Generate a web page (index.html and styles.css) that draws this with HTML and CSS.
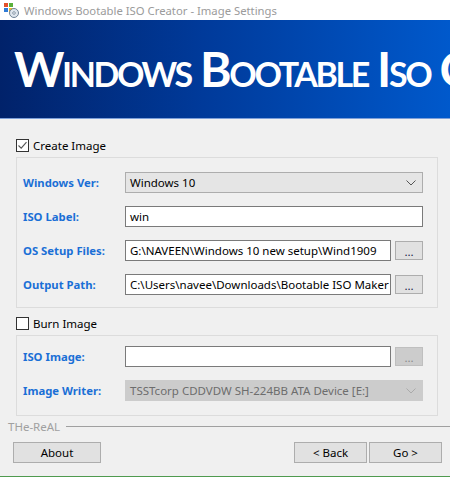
FILE: index.html
```html
<!DOCTYPE html>
<html>
<head>
    <title>Windows Bootable ISO Creator - Image Settings</title>
    <link rel="stylesheet" href="styles.css">
</head>
<body>
    <div class="titlebar">
        <svg class="app-icon" width="16" height="16" viewBox="0 0 16 16">
            <rect x="1" y="1" width="4" height="4" fill="#e2502a"/>
            <rect x="6" y="1" width="4" height="4" fill="#5ab03c"/>
            <rect x="1" y="6" width="4" height="4" fill="#2f7bd6"/>
            <rect x="6" y="6" width="4" height="4" fill="#f2b521"/>
            <circle cx="11" cy="11" r="4.5" fill="#dfe6ee" stroke="#6f8296" stroke-width="1"/>
            <circle cx="11" cy="11" r="1.3" fill="#fff" stroke="#6f8296" stroke-width="0.8"/>
        </svg>
        <span class="title-text">Windows Bootable ISO Creator - Image Settings</span>
    </div>

    <div class="banner">
        <span class="banner-text">Windows Bootable Iso Creator</span>
    </div>

    <div class="content">
        <label class="check-row">
            <span class="checkbox checked">
                <svg width="11" height="11" viewBox="0 0 11 11"><path d="M1.5 5.5 L4.2 8.2 L9.5 2.2" fill="none" stroke="#555" stroke-width="1.1"/></svg>
            </span>
            <span>Create Image</span>
        </label>

        <div class="group group-create">
            <div class="row">
                <span class="label">Windows Ver:</span>
                <div class="combo">
                    <span>Windows 10</span>
                    <svg class="chevron" width="10" height="6" viewBox="0 0 10 6"><path d="M0.5 0.5 L5 5 L9.5 0.5" fill="none" stroke="#555" stroke-width="1"/></svg>
                </div>
            </div>
            <div class="row">
                <span class="label">ISO Label:</span>
                <div class="textbox">win</div>
            </div>
            <div class="row">
                <span class="label">OS Setup Files:</span>
                <div class="textbox short">G:\NAVEEN\Windows 10 new setup\Wind1909</div>
                <div class="browse">...</div>
            </div>
            <div class="row">
                <span class="label">Output Path:</span>
                <div class="textbox short">C:\Users\navee\Downloads\Bootable ISO Maker</div>
                <div class="browse">...</div>
            </div>
        </div>

        <label class="check-row burn">
            <span class="checkbox"></span>
            <span>Burn Image</span>
        </label>

        <div class="group group-burn">
            <div class="row">
                <span class="label">ISO Image:</span>
                <div class="textbox short"></div>
                <div class="browse disabled">...</div>
            </div>
            <div class="row">
                <span class="label">Image Writer:</span>
                <div class="combo disabled">
                    <span>TSSTcorp CDDVDW SH-224BB ATA Device [E:]</span>
                    <svg class="chevron" width="10" height="6" viewBox="0 0 10 6"><path d="M0.5 0.5 L5 5 L9.5 0.5" fill="none" stroke="#aaa" stroke-width="1"/></svg>
                </div>
            </div>
        </div>
    </div>

    <div class="footer">
        <div class="signature">
            <span>THe-ReAL</span>
            <div class="sig-line"></div>
        </div>
        <div class="buttons">
            <div class="btn about">About</div>
            <div class="spacer"></div>
            <div class="btn nav">&lt; Back</div>
            <div class="btn nav">Go &gt;</div>
        </div>
    </div>
    <div class="bottom-edge"></div>
</body>
</html>
```

FILE: styles.css
```css
body {
    margin: 0;
    width: 450px;
    height: 477px;
    overflow: hidden;
    background: #f0f0f0;
    font-family: 'Noto Sans', 'Open Sans', sans-serif;
    font-size: 11.5px;
    color: #000;
}

.titlebar {
    height: 20px;
    background: #fff;
    display: flex;
    align-items: center;
    padding-left: 3px;
}
.app-icon {
    margin-right: 5px;
}
.title-text {
    color: #9b9b9b;
    font-size: 11.3px;
    white-space: nowrap;
}

.banner {
    height: 98px;
    background: linear-gradient(90deg, #01226a 0%, #003a9a 45%, #0059cc 100%);
    border-bottom: 1px solid #7d9fd8;
    display: flex;
    align-items: center;
    padding-left: 14px;
    overflow: hidden;
    white-space: nowrap;
}
.banner-text {
    color: #fff;
    font-family: 'Lato', 'Open Sans', sans-serif;
    font-weight: bold;
    font-size: 48px;
    font-variant: small-caps;
    letter-spacing: -2.4px;
    margin-top: -2px;
}

.content {
    padding: 19px 12px 0 16px;
}

.check-row {
    display: flex;
    align-items: center;
    height: 14px;
    gap: 4px;
}
.checkbox {
    width: 11px;
    height: 11px;
    border: 1px solid #333;
    background: #fff;
    display: flex;
    align-items: center;
    justify-content: center;
}

.group {
    border: 1px solid #dcdcdc;
    padding-left: 6px;
    display: flex;
    flex-direction: column;
    gap: 13px;
}
.group-create {
    margin-top: 5px;
    padding-top: 14px;
    padding-bottom: 12px;
}
.burn {
    margin-top: 8px;
}
.group-burn {
    margin-top: 5px;
    padding-top: 10px;
    padding-bottom: 14px;
}

.row {
    display: flex;
    align-items: center;
    height: 21px;
}
.label {
    width: 102px;
    color: #1a6fd6;
    font-weight: bold;
    font-size: 11.3px;
    white-space: nowrap;
}

.textbox, .combo {
    box-sizing: border-box;
    height: 21px;
    width: 298px;
    border: 1px solid #7a7a7a;
    background: #fff;
    padding: 0 4px;
    display: flex;
    align-items: center;
    white-space: nowrap;
    overflow: hidden;
}
.textbox.short {
    width: 266px;
}
.combo {
    background: #e5e5e5;
    border-color: #adadad;
    justify-content: space-between;
    padding-right: 6px;
}
.combo.disabled {
    background: #cccccc;
    border-color: #cccccc;
    color: #6d6d6d;
}
.chevron {
    flex: none;
}

.browse {
    box-sizing: border-box;
    width: 28px;
    height: 19px;
    margin-left: 4px;
    background: #e1e1e1;
    border: 1px solid #adadad;
    color: #1a1a4a;
    display: flex;
    align-items: center;
    justify-content: center;
    line-height: 1;
    padding-top: 2px;
}
.browse.disabled {
    background: #cccccc;
    border-color: #bfbfbf;
    color: #8a8a8a;
}

.footer {
    padding-top: 3px;
}
.signature {
    display: flex;
    align-items: center;
    padding-left: 8px;
    color: #a0a0a0;
    gap: 6px;
}
.sig-line {
    flex: 1;
    height: 1px;
    background: #a0a0a0;
}
.buttons {
    display: flex;
    padding: 0 8px 0 13px;
    margin-top: 8px;
    gap: 2px;
}
.btn {
    box-sizing: border-box;
    height: 21px;
    background: #e1e1e1;
    border: 1px solid #adadad;
    display: flex;
    align-items: center;
    justify-content: center;
}
.about {
    width: 88px;
}
.nav {
    width: 73px;
}
.spacer {
    flex: 1;
}

.bottom-edge {
    position: fixed;
    left: 0;
    right: 0;
    bottom: 0;
    height: 1px;
    background: #4f9a4f;
}
```
